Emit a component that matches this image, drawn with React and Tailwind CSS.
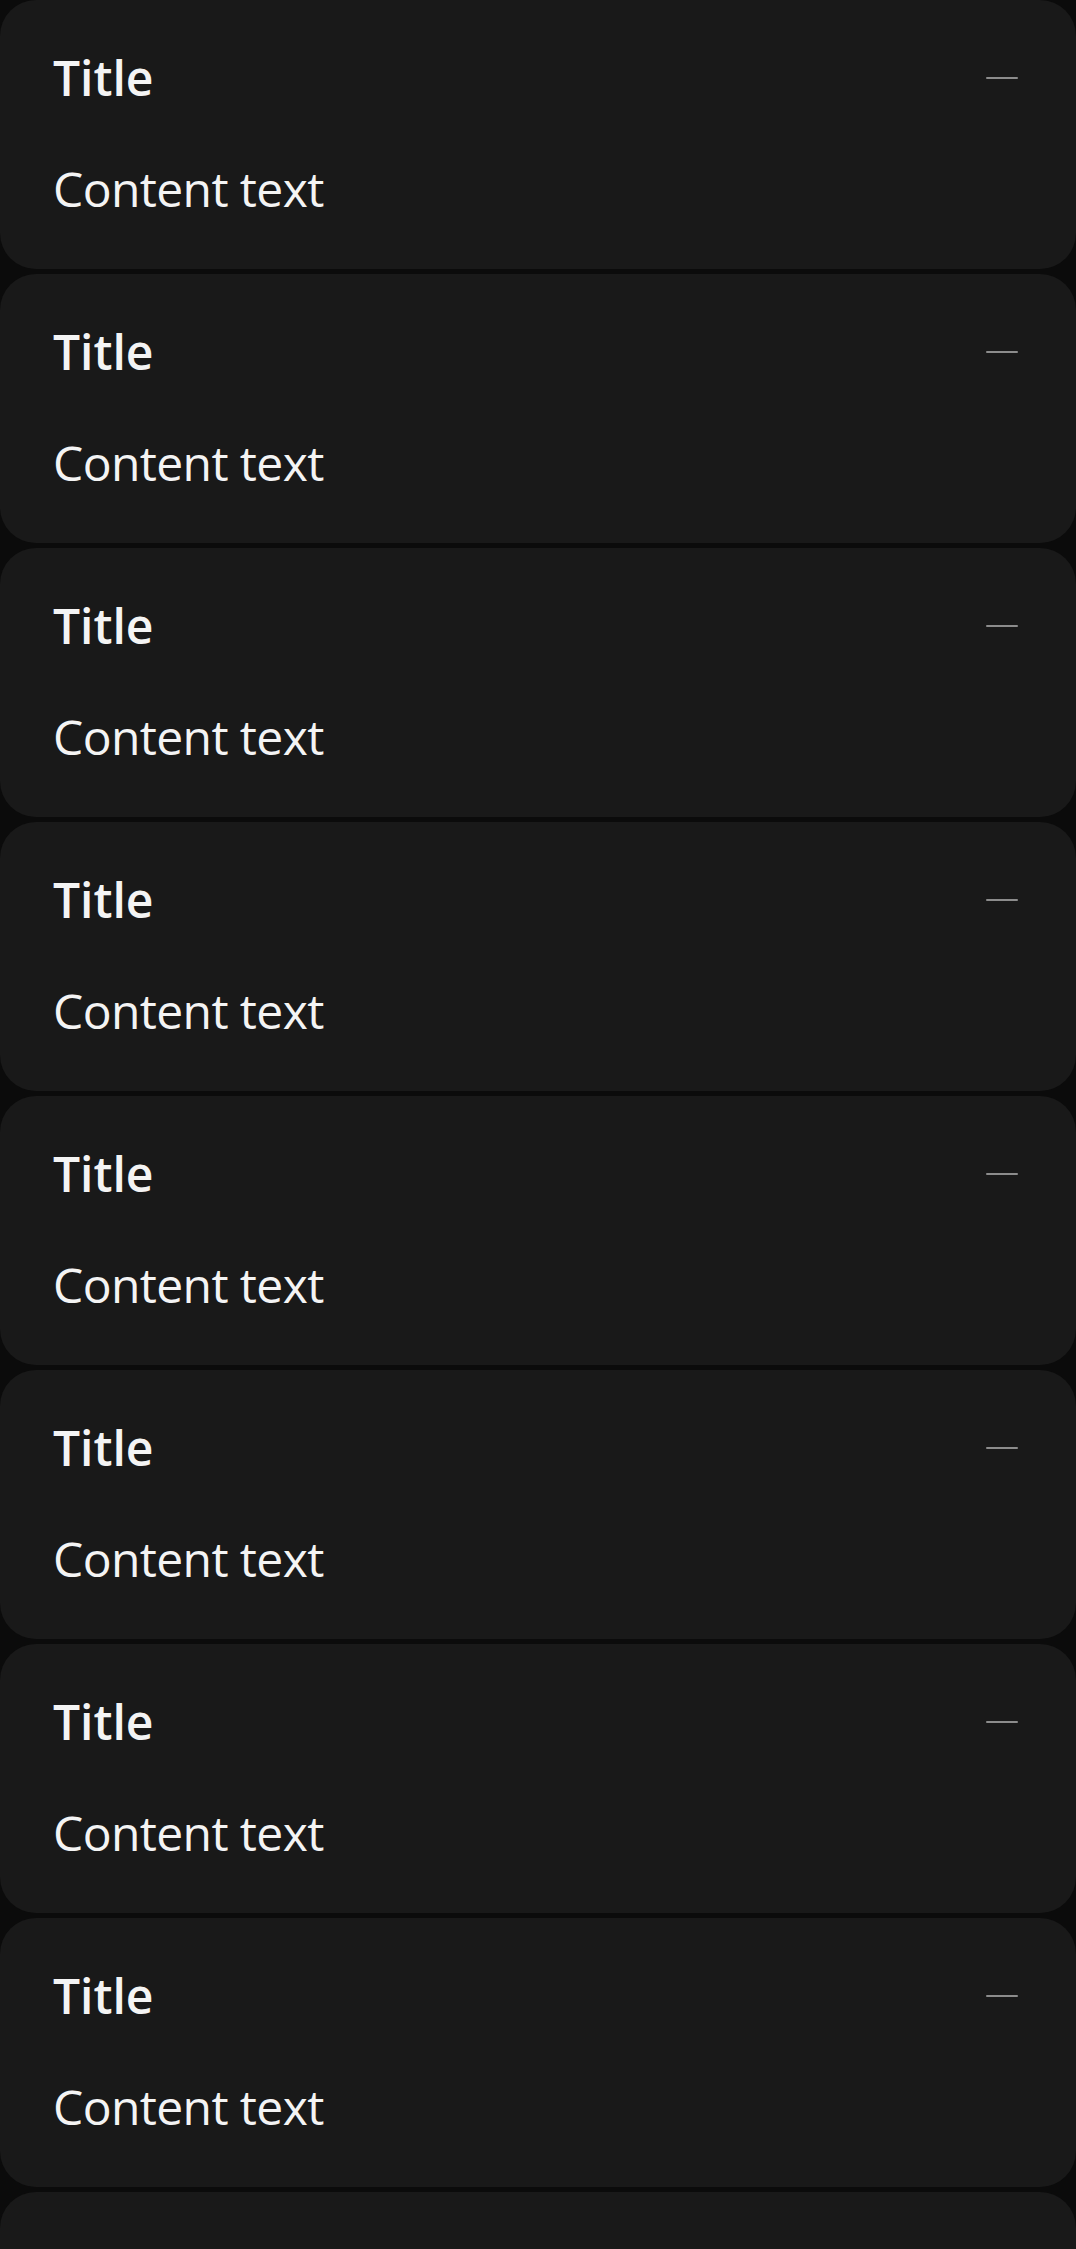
import React from 'react';

const items = Array.from({ length: 9 }, (_, i) => ({ id: i, title: 'Title', content: 'Content text' }));

function Item({ title, content }) {
  return (
    <div className="h-[269px] shrink-0 rounded-[36px] bg-[#191919] pl-[53px] pr-[58px] pt-[45px]">
      <div className="flex items-center justify-between">
        <span className="text-[48px] leading-[66px] font-semibold text-[#f4f4f4]">{title}</span>
        <span className="block h-[2px] w-[32px] rounded-full bg-[#8c8c8c]" />
      </div>
      <p className="mt-[45px] text-[48px] leading-[66px] tracking-[-0.6px] text-[#f4f4f4]">{content}</p>
    </div>
  );
}

export default function App() {
  return (
    <div
      className="flex h-[2249px] flex-col gap-[5px] overflow-hidden bg-[#0b0b0b]"
      style={{ fontFamily: '"Open Sans", "Noto Sans", sans-serif' }}
    >
      {items.map((it) => (
        <Item key={it.id} title={it.title} content={it.content} />
      ))}
    </div>
  );
}
